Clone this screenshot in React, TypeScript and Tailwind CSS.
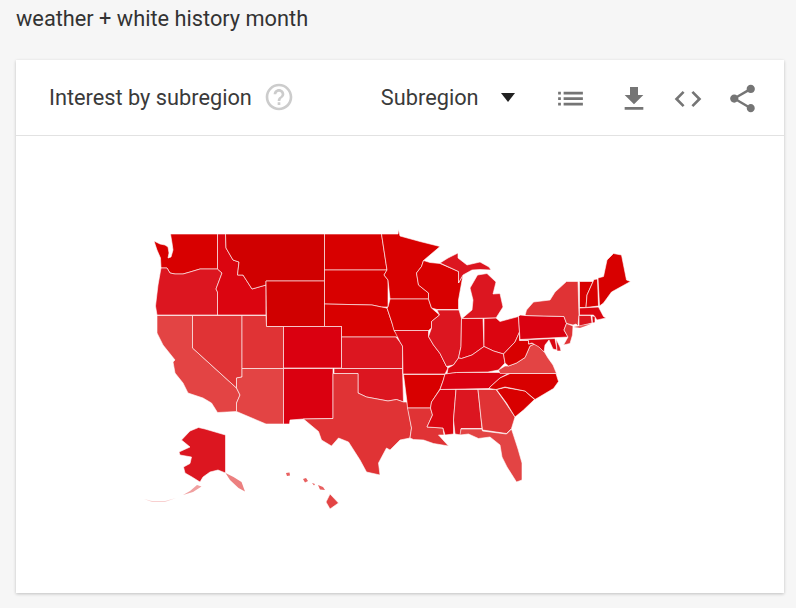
const C = {
  deep: "#d00000",
  red: "#d80000",
  crimson: "#db0510",
  mid: "#dc1620",
  warm: "#e03335",
  soft: "#e34444",
};

// page coordinates, the svg viewBox below starts at the card body's corner
const states: [string, string, string][] = [
  ["WA", C.red, "154,241 160,244 165,245 168,247 169,253 168,258 171,257 173,250 172,243 170.5,234 217.5,234 217.5,269 200,269 190,272 183,274 175,274 170,273 167,268 161,268 160.5,258 157,250"],
  ["OR", C.mid, "161,268 167,268 170,273 175,274 183,274 190,272 200,269 217.5,269 222,273 216,289 217.5,292 217.5,315 157,315 155.5,306 158,285"],
  ["ID", C.crimson, "217.5,234 225.5,234 226,248 233,260 239,262 237.5,275 243,275 252,289 266,285 266,315 217.5,315 217.5,292 216,289 222,273 217.5,269"],
  ["MT", C.deep, "225.5,234 324.5,234 324.5,281 266,281 266,285 252,289 243,275 237.5,275 239,262 233,260 226,248"],
  ["WY", C.deep, "266,281 324.5,281 324.5,326.5 266.5,326.5"],
  ["ND", C.red, "324.5,234 381.5,234 385,257 387,270 324.5,270"],
  ["SD", C.red, "324.5,270 387,270 384,275 388,280 388,307 381.5,307 372,305 324.5,304"],
  ["NE", C.red, "324.5,304 372,305 381.5,307 387,308 392,323 395,332 400,337 341.5,337 341.5,326.5 324.5,326.5"],
  ["CA", C.soft, "157,315.5 192.5,315.5 192.5,348 236.5,388 240,395 236.5,403 236.5,411.5 217.5,412.5 211.5,403 203,398 188,393 183,383 175,373 173,362 175,360 163,345 157,333"],
  ["NV", C.warm, "192.5,315.5 242,315.5 242,377 236.5,378 236.5,388 192.5,348"],
  ["UT", C.warm, "242,315.5 266,315.5 266.5,326.5 283.5,326.5 283.5,368.5 242,368.5"],
  ["AZ", C.soft, "242,368.5 283.5,368.5 283.5,424 266,424 236.5,411.5 236.5,403 240,395 236.5,388 236.5,378 242,377"],
  ["CO", "#da0010", "283.5,326.5 341.5,326.5 341.5,368 283.5,368"],
  ["NM", "#da0010", "283.5,368.5 333,368.5 333,418.5 303.5,419 290,420 289.5,424 283.5,424"],
  ["KS", C.mid, "341.5,337 396,337 400,342 402.5,346 402.5,368.5 341.5,368.5"],
  ["OK", C.mid, "334,368.5 402.5,368.5 403.5,402 396.5,399.5 388,401 366.5,397 358,393 358,373.5 334,373.5"],
  ["TX", C.warm, "333,373.5 358,373.5 358,393 366.5,397 388,401 396.5,399.5 403.5,402 407,402 411.5,428 410,438 400,440 390,450 386.5,448 378.5,463 380,475 366.5,472 360,460 348.5,442 338.5,438 331.5,446 321.5,440 318.5,431.5 303.5,419 333,418.5"],
  ["MN", C.red, "381.5,234 398,234 398.5,229.5 400,236 420,241.5 440,246.5 423.5,260.5 421.5,266.5 416.5,273 418.5,285 428.5,293 428.5,299 390,299 388,280 384,275 387,270 385,257"],
  ["IA", C.red, "390,299 428.5,299 431.5,308 439.5,315 431.5,321.5 431.5,328 428.5,330.5 394,330.5 392,323 387,308 388,307"],
  ["MO", C.crimson, "394,330.5 428.5,330.5 428.5,336.5 433.5,345 440,353.5 446.5,366.5 448,368 445,374 403,374 402.5,346 400,342 395,332"],
  ["AR", C.red, "403.5,374.5 445,374.5 443,381 440,389 431.5,402 430.5,408 407.5,408 407,402"],
  ["LA", C.warm, "407.5,408 430.5,408 432.5,415 427,427 443,428 444,435 438.5,435 448.5,446 433.5,443.5 423.5,440 413.5,439.5 410,438 411.5,428"],
  ["WI", C.red, "423.5,260.5 430,262.5 440,263.5 458.5,271.5 458.5,283 463,275 458.5,300 458.5,309.5 437,309.5 431.5,308 428.5,299 428.5,293 418.5,285 416.5,273 421.5,266.5"],
  ["MI-U", C.mid, "440,263 448,258 458,253 458,258 467,265 480,262 489,267 491,270 480,269.5 472,270 463,275 458.5,283 458.5,271.5"],
  ["MI", C.mid, "477.5,275 487,273.5 496,282 493,294 500,293.5 503,307 496,318 462,318.5 472,310 473,300 470,288"],
  ["IL", C.mid, "437,310 459,310 461.5,318.5 461,346.5 458.5,358 453.5,365 446.5,366.5 440,353.5 433.5,345 428.5,336.5 431.5,328 431.5,321.5 439.5,315"],
  ["IN", C.crimson, "461.5,318.5 483,318.5 484,346.5 472,355 461.5,358.5 458.5,358 461,346.5"],
  ["OH", C.crimson, "484,318.5 496,318 500,321.5 518.5,316.5 519.5,332 515,342 503.5,354 493.5,351 484,346.5"],
  ["KY", C.crimson, "461.5,358.5 472,355 484,346.5 493.5,351 503.5,354 505,363 498.5,370 488,372 456.5,372.5 447,374 448,368 453.5,365 458.5,358"],
  ["TN", "#da0010", "445,374 456.5,372.5 510,372.5 500,378 490,387 489,388.5 440,389.5 443,381"],
  ["MS", C.crimson, "440,389.5 456,389.5 453.5,420 453.5,434 445,435 443,428 427,427 432.5,415 430.5,408 431.5,402"],
  ["AL", C.mid, "456,389.5 478,389.5 481,418 482,428.5 461,428.5 461,435 455,434 453.5,420"],
  ["GA", C.warm, "478,389.5 496,389.5 505,402 515,417 511.5,428.5 506.5,433.5 482.5,430 481,418"],
  ["FL", C.soft, "461,429 482,429 482.5,431 506.5,434 511.5,429 518,449 522,463 522,480 516.5,482 507,467 502,457 500,445 490,437 478.5,438.5 468.5,434 460,435"],
  ["SC", C.red, "496.5,389.5 505,387.5 525,391 534.5,399.5 523.5,410 515,417 506.5,403"],
  ["NC", C.red, "510,373.5 556,373.5 558.5,381.5 553.5,388.5 535,399.5 525,391 505,387 496,389.5 489,388.5 490,387 500,378"],
  ["VA", C.soft, "498.5,370 505,366 508.5,366 516.5,363 525,357.5 530,346 536.5,343 542,348 548,358 553,365 556.5,373.5 500,373.5"],
  ["WV", C.red, "503.5,354 515,342 519.5,332 519.5,340.5 528.5,340.5 528.5,344 536.5,343 530,346 525,357.5 516.5,363 508.5,366 505,363"],
  ["PA", "#da0010", "520,315 525,315.5 564,316.5 566.5,323.5 564,330 568,337 520,339.5 519.5,332 518.5,316.5"],
  ["NY", C.warm, "533.5,302 550,300 555,292 566.5,281.5 578,281.5 578.5,300 579,315 578,326 576,324 573,325 566.5,323.5 564,316.5 525,315.5 526.5,310"],
  ["NJ", C.warm, "566.5,323.5 573,326 572.5,335 570,343.5 563.5,345 568,337 564,330"],
  ["MD", C.crimson, "520,340 555,338.5 557,350 553,349 549,340 545,345 544,352 539,347 532,343 528.5,344 528.5,340.5 520,340.5"],
  ["DE", C.mid, "556,339 560,347 561,351 557,351"],
  ["VT", C.red, "579.5,281.5 593,281.5 587,295 586,307.5 579.5,307.5"],
  ["NH", C.red, "594,279.5 597.5,279 598.5,306 586,307.5 587,295"],
  ["ME", C.red, "598,278 603.5,276.5 607,260 613.5,253.5 621.5,255 626.5,280 630.5,281.5 611.5,292 603.5,303 599.5,306"],
  ["MA", C.crimson, "579.5,308 598.5,307 603.5,316.5 606,318 597,320 593.5,315 579.5,315"],
  ["CT", C.mid, "579,315.5 591,315.5 592,323 579,326"],
  ["RI", C.crimson, "592,316 595,316.5 595,322.5 592.5,323"],
  ["AK", C.mid, "190,431 198.5,427.5 205,429 225.5,435 225.5,473 218,470 210,472 203,477 200,482 192,477 185,473 183.5,467 190,463.5 191.5,457 180,455 179,452 190,447 181.5,440"],
  ["HI", C.soft, "330,494 338.5,503 330,509 326,502"],
];

const fragments: [string, string][] = [
  ["#ec8080", "225.5,473 233.5,477 241.5,482 245,491.5 238.5,488 230,480"],
  ["#f0a0a0", "183,495 190,491 197,485 201.5,486.5 193,492"],
  ["#e86060", "303,479 306,478 308,481 305,482.5"],
  ["#e86060", "286,473 289.5,472.5 290,475.5 287,476"],
  ["#e86060", "318,485 323,487 325,490 320,489.5"],
  ["#e86060", "312,483 315,484 314,485.5"],
  ["#e86060", "573.5,327 584,325 591,324 580,328"],
  ["#f8d0d0", "144,499 152,501 165,501 176,498 165,502 152,502"],
];

function MapChart() {
  return (
    <svg viewBox="16 136 768 457" className="block h-[457px] w-[768px]">
      {states.map(([id, fill, points]) => (
        <polygon
          key={id}
          points={points}
          fill={fill}
          stroke="#ffffff"
          strokeOpacity={0.6}
          strokeWidth={1}
          strokeLinejoin="round"
        />
      ))}
      {fragments.map(([fill, points]) => (
        <polygon key={points} points={points} fill={fill} />
      ))}
    </svg>
  );
}

function Glyph({ d, className }: { d: string; className: string }) {
  return (
    <svg viewBox="0 0 24 24" className={className} fill="currentColor">
      <path d={d} />
    </svg>
  );
}

export default function App() {
  return (
    <div className="h-[608px] w-[796px] overflow-hidden bg-[#f6f6f6] font-['Roboto',sans-serif]">
      <div className="h-[60px] pl-4 pt-[5px] text-[21.75px] leading-[28px] text-[#333333]">
        weather + white history month
      </div>

      <div className="ml-4 h-[533px] w-[768px] bg-white shadow-[0_1px_3px_rgba(0,0,0,0.22)]">
        <div className="flex h-[76px] items-center border-b border-[#e2e2e2] pt-[2px] text-[21.75px] text-[#3a3a3a]">
          <span className="ml-[33px]">Interest by subregion</span>
          <Glyph
            className="mb-[3px] ml-[11px] h-8 w-8 text-[#cccccc]"
            d="M11 18h2v-2h-2v2zm1-16C6.48 2 2 6.48 2 12s4.48 10 10 10 10-4.48 10-10S17.52 2 12 2zm0 18c-4.41 0-8-3.59-8-8s3.59-8 8-8 8 3.59 8 8-3.59 8-8 8zm0-14c-2.21 0-4 1.79-4 4h2c0-1.1.9-2 2-2s2 .9 2 2c0 2-3 1.75-3 5h2c0-2.25 3-2.5 3-5 0-2.21-1.79-4-4-4z"
          />
          <span className="ml-[86px]">Subregion</span>
          <span className="mb-[3px] ml-[22px] h-0 w-0 border-x-[7px] border-t-[9px] border-x-transparent border-t-[#212121]" />
          <Glyph
            className="ml-[39px] h-[33px] w-[33px] text-[#757575]"
            d="M3 13h2v-2H3v2zm0 4h2v-2H3v2zm0-8h2V7H3v2zm4 4h14v-2H7v2zm0 4h14v-2H7v2zM7 7v2h14V7H7z"
          />
          <Glyph
            className="ml-[31px] h-8 w-8 text-[#757575]"
            d="M19 9h-4V3H9v6H5l7 7 7-7zM5 18v2h14v-2H5z"
          />
          <Glyph
            className="ml-[22px] h-8 w-8 text-[#757575]"
            d="M9.4 16.6L4.8 12l4.6-4.6L8 6l-6 6 6 6 1.4-1.4zm5.2 0l4.6-4.6-4.6-4.6L16 6l6 6-6 6-1.4-1.4z"
          />
          <Glyph
            className="ml-[22px] h-[33px] w-[33px] text-[#757575]"
            d="M18 16.08c-.76 0-1.44.3-1.96.77L8.91 12.7c.05-.23.09-.46.09-.7s-.04-.47-.09-.7l7.05-4.11c.54.5 1.25.81 2.04.81 1.66 0 3-1.34 3-3s-1.34-3-3-3-3 1.34-3 3c0 .24.04.47.09.7L8.04 9.81C7.5 9.31 6.79 9 6 9c-1.66 0-3 1.34-3 3s1.34 3 3 3c.79 0 1.5-.31 2.04-.81l7.12 4.16c-.05.21-.08.43-.08.65 0 1.61 1.31 2.92 2.92 2.92 1.61 0 2.92-1.31 2.92-2.92s-1.31-2.92-2.92-2.92z"
          />
        </div>
        <MapChart />
      </div>
    </div>
  );
}
